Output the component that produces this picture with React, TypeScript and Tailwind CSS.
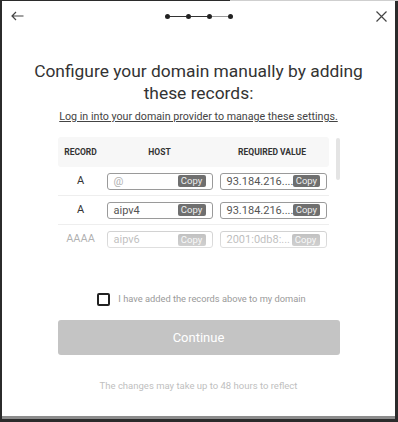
import React from "react";

type RecordRow = {
  type: string;
  host: string;
  value: string;
  placeholder?: boolean;
};

const rows: RecordRow[] = [
  { type: "A", host: "@", value: "93.184.216....", placeholder: true },
  { type: "A", host: "aipv4", value: "93.184.216...." },
  { type: "AAAA", host: "aipv6", value: "2001:0db8:..." },
];

const CopyField: React.FC<{ text: string; muted?: boolean; width: string }> = ({ text, muted, width }) => (
  <div
    className={`${width} h-[17px] border border-[#9a9a9a] rounded-[3px] flex items-center justify-between pl-[6px] pr-[6px]`}
  >
    <span className={`text-[11px] leading-none ${muted ? "text-[#b0b0b0]" : "text-[#555]"}`}>{text}</span>
    <button
      type="button"
      className="h-[12px] w-[28px] rounded-[2px] bg-[#6f6f6f] text-[9.5px] leading-none text-[#eee] flex items-center justify-center"
    >
      Copy
    </button>
  </div>
);

const Stepper: React.FC = () => (
  <div className="flex items-center">
    <span className="w-[5px] h-[5px] rounded-full bg-[#222]" />
    <span className="w-[16px] h-px bg-[#333]" />
    <span className="w-[5px] h-[5px] rounded-full bg-[#222]" />
    <span className="w-[16px] h-px bg-[#333]" />
    <span className="w-[5px] h-[5px] rounded-full bg-[#222]" />
    <span className="w-[16px] h-px bg-[#999]" />
    <span className="w-[5px] h-[5px] rounded-full bg-[#222]" />
  </div>
);

export default function App() {
  return (
    <div
      className="w-[398px] h-[422px] bg-[#2b2b2b] flex flex-col"
      style={{ fontFamily: "Roboto, 'Liberation Sans', sans-serif" }}
    >
      <div className="flex h-px shrink-0">
        <div className="w-[230px] bg-[#2b2b2b]" />
        <div className="flex-1 bg-[#cfcfcf]" />
      </div>
      <div className="flex-1 flex flex-col pl-[2px] pr-[3px] pb-[3px]">
        <div className="flex-1 bg-white border-b-[3px] border-[#8c8c8c] flex flex-col">
          {/* top bar */}
          <div className="grid grid-cols-[1fr_auto_1fr] items-center h-[30px] pl-[9px] pr-[8px]">
            <button type="button" className="justify-self-start text-[#444]">
              <svg width="13" height="10" viewBox="0 0 13 10" fill="none" stroke="currentColor" strokeWidth="1.2">
                <path d="M12.5 5H1M5 1L1 5l4 4" />
              </svg>
            </button>
            <Stepper />
            <button type="button" className="justify-self-end text-[#444]">
              <svg width="11" height="11" viewBox="0 0 11 11" fill="none" stroke="currentColor" strokeWidth="1.2">
                <path d="M0.5 0.5L10.5 10.5M10.5 0.5L0.5 10.5" />
              </svg>
            </button>
          </div>

          <h1 className="mt-[29px] text-center text-[17.4px] leading-[22px] text-[#333] px-[30px]">
            Configure your domain manually by adding these records:
          </h1>
          <a className="mt-[6px] text-center text-[10.7px] leading-[14px] text-[#444] underline">
            Log in into your domain provider to manage these settings.
          </a>

          {/* records */}
          <div className="mt-[13px] w-[282px] mx-auto flex gap-[7px] h-[118px] overflow-hidden">
            <div className="w-[271px] relative">
              <div className="flex items-center h-[30px] bg-[#f7f7f7] rounded-[3px] text-[8.5px] font-bold text-[#333]">
                <div className="w-[46px] text-center">RECORD</div>
                <div className="w-[112px] text-center">HOST</div>
                <div className="flex-1 text-center">REQUIRED VALUE</div>
              </div>
              {rows.map((r, i) => (
                <div
                  key={i}
                  className={`flex items-center h-[29px] ${i < rows.length - 1 ? "border-b border-[#eee]" : ""}`}
                >
                  <div className="w-[46px] text-center text-[11px] text-[#333]">{r.type}</div>
                  <div className="ml-[3px]">
                    <CopyField width="w-[106px]" text={r.host} muted={r.placeholder} />
                  </div>
                  <div className="ml-[7px]">
                    <CopyField width="w-[107px]" text={r.value} />
                  </div>
                </div>
              ))}
              <div className="absolute left-0 right-0 bottom-0 h-[30px] bg-linear-to-b from-white/50 to-white/75" />
            </div>
            <div className="w-[4px] pt-px">
              <div className="h-[42px] rounded-full bg-[#e4e4e4]" />
            </div>
          </div>

          <label className="mt-[37px] flex items-center justify-center gap-[8px] h-[14px] pl-[6px]">
            <span className="w-[13px] h-[13px] border-2 border-[#222] rounded-[2px]" />
            <span className="text-[9.3px] text-[#9a9a9a]">I have added the records above to my domain</span>
          </label>

          <button
            type="button"
            className="mt-[14px] mx-auto w-[282px] h-[35px] rounded-[3px] bg-[#c4c4c4] text-white text-[13px]"
          >
            Continue
          </button>

          <p className="mt-[25px] text-center text-[9.5px] leading-[12px] text-[#c0c0c0]">
            The changes may take up to 48 hours to reflect
          </p>
        </div>
      </div>
    </div>
  );
}
